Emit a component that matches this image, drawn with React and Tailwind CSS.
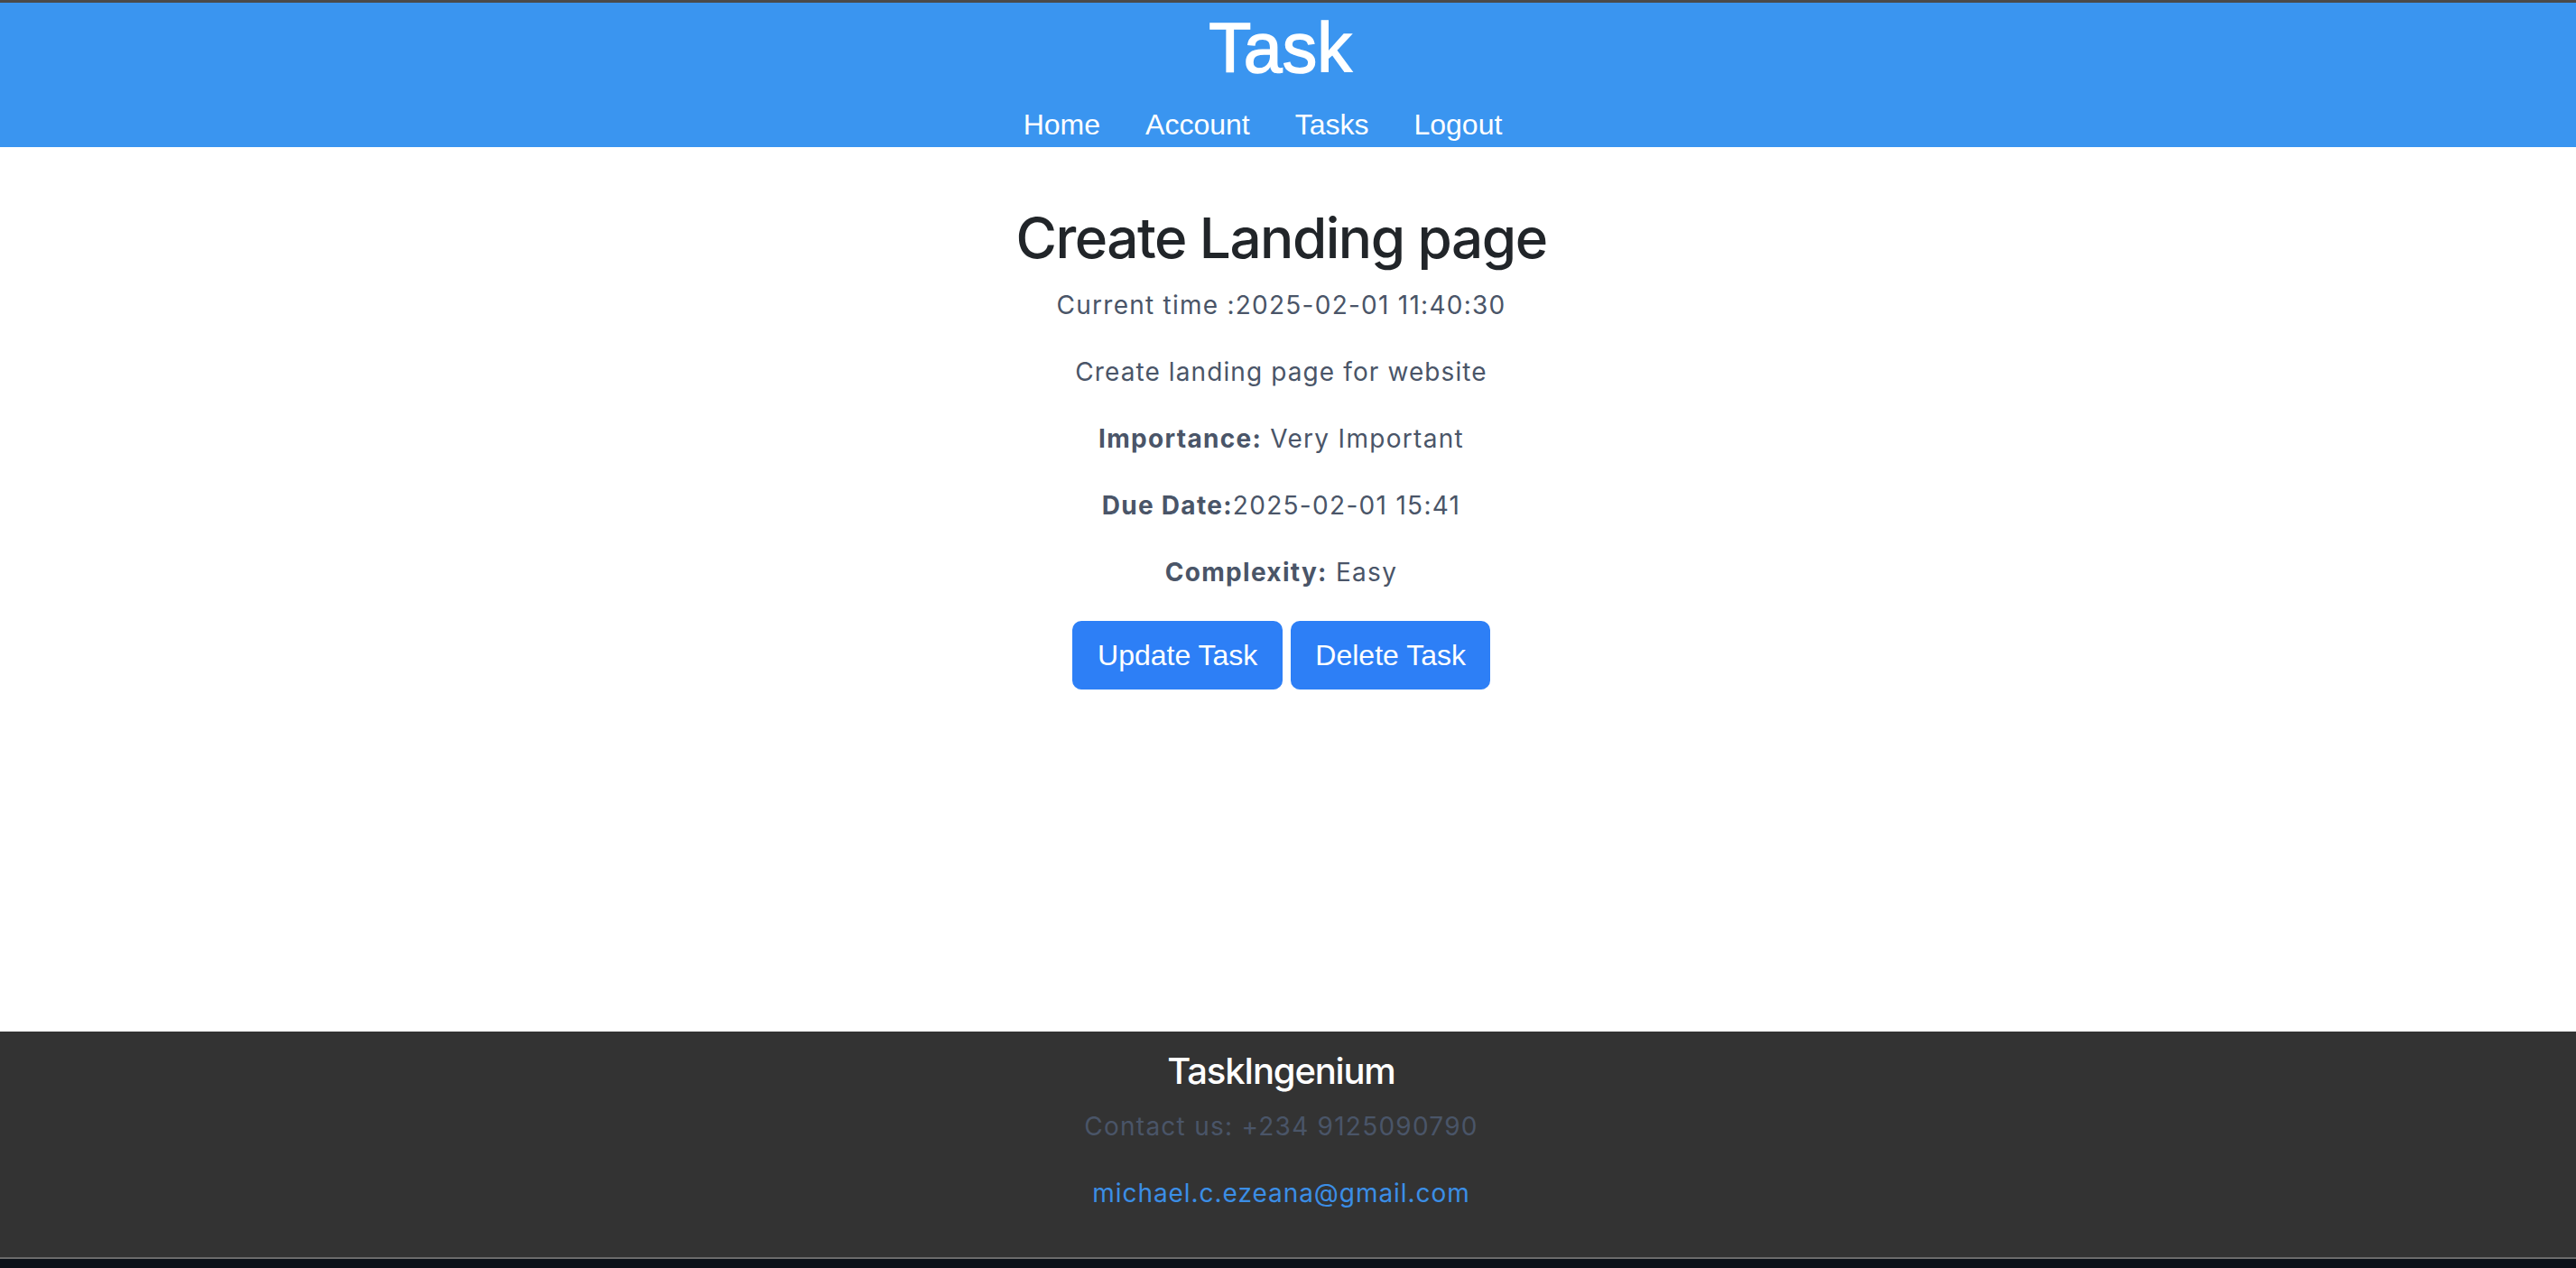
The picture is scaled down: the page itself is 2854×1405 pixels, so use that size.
import React from 'react';

const details = [
  { label: 'Importance:', value: ' Very Important' },
  { label: 'Due Date:', value: '2025-02-01 15:41' },
  { label: 'Complexity:', value: ' Easy' },
];

export default function App() {
  return (
    <div className="min-h-screen flex flex-col bg-white font-['Inter',sans-serif]">
      {/* top window edge */}
      <div className="h-[3px] bg-[#4a4a4a]"></div>

      {/* --- HEADER --- */}
      <header className="bg-[#3a95f0] h-[160px] flex flex-col items-center text-white font-['Liberation_Sans',Arial,sans-serif]">
        <h1 className="text-[77px] leading-none pt-[12px] pr-[17px] [-webkit-text-stroke:1.5px_white]">Task</h1>
        <nav className="flex justify-center mt-[30px] text-[32px] leading-none">
          <a className="mr-[50px]">Home</a>
          <a className="mr-[50px]">Account</a>
          <a className="mr-[50px]">Tasks</a>
          <a className="mr-[56px]">Logout</a>
        </nav>
      </header>

      {/* --- TASK DETAIL --- */}
      <main className="flex-1 flex flex-col items-center pr-[15px] text-[#4a5568]">
        <h2 className="text-[62px] leading-none font-medium tracking-[-1.5px] text-[#212529] pt-[70px]">Create Landing page</h2>
        <p className="text-[28px] leading-[28px] tracking-[1.25px] mt-[29px]">Current time :2025-02-01 11:40:30</p>
        <p className="text-[28px] leading-[28px] tracking-[1.1px] mt-[46px]">Create landing page for website</p>
        {details.map((d) => (
          <p key={d.label} className="text-[28px] leading-[28px] tracking-[1.3px] mt-[46px] whitespace-pre">
            <span className="font-bold">{d.label}</span>{d.value}
          </p>
        ))}
        <div className="flex gap-[9px] mt-[40px] font-['Liberation_Sans',Arial,sans-serif]">
          <button className="h-[76px] px-[28px] rounded-[10px] bg-[#2d7ff6] text-white text-[32px]">Update Task</button>
          <button className="h-[76px] px-[27px] rounded-[10px] bg-[#2d7ff6] text-white text-[32px]">Delete Task</button>
        </div>
      </main>

      {/* --- FOOTER --- */}
      <footer className="bg-[#333333] h-[250px] flex flex-col items-center pr-[15px]">
        <h3 className="text-[40px] leading-none font-medium tracking-[-1.2px] text-white pt-[24px]">TaskIngenium</h3>
        <p className="text-[28px] leading-[28px] tracking-[1.25px] text-[#4a5568] mt-[27px]">Contact us: +234 9125090790</p>
        <a className="text-[28px] leading-[28px] tracking-[0.95px] text-[#3b8ee6] mt-[46px]">michael.c.ezeana@gmail.com</a>
      </footer>
      <div className="h-[2px] bg-[#6b6b6b]"></div>
      <div className="h-[10px] bg-[#0b1018]"></div>
    </div>
  );
}
